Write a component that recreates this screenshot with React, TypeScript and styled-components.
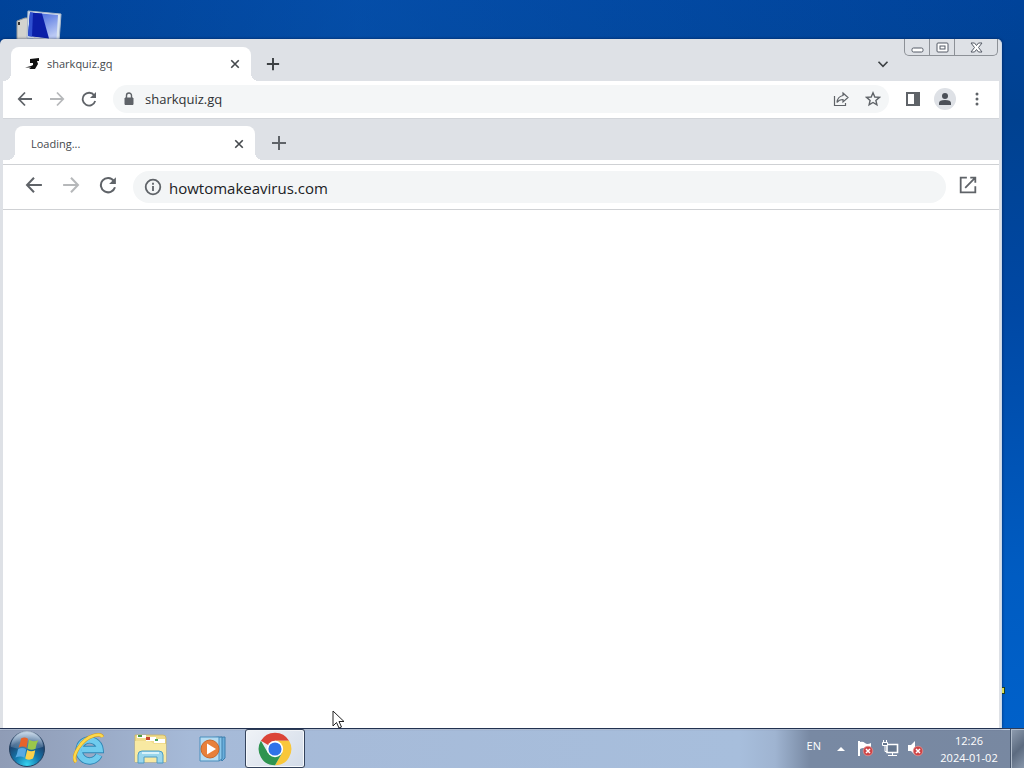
import React from "react";
import styled, { createGlobalStyle } from "styled-components";

const Global = createGlobalStyle`
  * { box-sizing: border-box; }
  body { margin: 0; font-family: "Open Sans", "Noto Sans", sans-serif; }
  button { border: 0; padding: 0; background: none; font: inherit; color: inherit; display: flex; align-items: center; justify-content: center; flex: none; }
  svg { display: block; }
`;

const Desktop = styled.div`
  min-height: 100vh;
  display: flex;
  flex-direction: column;
  background:
    linear-gradient(90deg, rgba(0, 70, 170, 0) 0%, rgba(10, 90, 185, 0.45) 35%, rgba(0, 70, 160, 0) 100%) 0 0 / 100% 39px no-repeat,
    linear-gradient(180deg, #00439a 0%, #004190 15%, #0048a4 40%, #005cc2 75%, #0062cc 100%);
`;

const Workspace = styled.main`
  flex: 1;
  display: flex;
  flex-direction: column;
  position: relative;
  padding: 39px 22px 0 0;
`;

const ComputerShortcut = styled.button`
  && { position: absolute; left: 16px; top: 10px; }
`;

const ShortcutEdge = styled.span`
  position: absolute;
  right: 19px;
  bottom: 34px;
  width: 3px;
  height: 7px;
  background: #d6dc5a;
  border: 1px solid #23401c;
  border-left: 0;
`;

const BrowserWindow = styled.section`
  flex: 1;
  position: relative;
  display: flex;
  flex-direction: column;
  background: #dee1e6;
  border-radius: 5px 5px 0 0;
  border-right: 1px solid #c9d9ec;
  padding: 0 2px 0 3px;
  box-shadow: 0 0 3px rgba(0, 20, 60, 0.7);
`;

const TabStrip = styled.div<{ $inner?: boolean }>`
  display: flex;
  align-items: center;
  height: 42px;
  padding: ${(p) => (p.$inner ? "8px 0 0 12px" : "8px 0 0 8px")};
  background: #dee1e6;
  box-shadow: ${(p) => (p.$inner ? "inset 0 1px #d2d5da" : "none")};
  border-radius: ${(p) => (p.$inner ? 0 : "5px 5px 0 0")};
  color: ${(p) => (p.$inner ? "#5f6368" : "#3c4043")};
`;

const Tab = styled.div<{ $inner?: boolean }>`
  position: relative;
  display: flex;
  align-items: center;
  width: 240px;
  height: 34px;
  padding: ${(p) => (p.$inner ? "1px 11px 0 16px" : "0 11px 0 14px")};
  gap: 8px;
  background: #fff;
  border-radius: 8px 8px 0 0;
  font-size: 11px;
  line-height: 16px;
  color: #45494d;
  &::before, &::after {
    content: "";
    position: absolute;
    bottom: 0;
    width: 8px;
    height: 8px;
  }
  &::before { left: -8px; background: radial-gradient(circle at 0 0, transparent 8px, #fff 8px); }
  &::after { right: -8px; background: radial-gradient(circle at 100% 0, transparent 8px, #fff 8px); }
`;

const TabTitle = styled.span`
  flex: 1;
`;

const NewTab = styled.button<{ $inner?: boolean }>`
  width: 28px;
  height: 28px;
  margin-left: ${(p) => (p.$inner ? 10 : 8)}px;
`;

const TabMenu = styled.button`
  && { margin: 0 104px 0 auto; }
  width: 24px;
  height: 24px;
`;

const CaptionButtons = styled.div`
  position: absolute;
  top: 0;
  right: 3px;
  display: flex;
  height: 17px;
  border: 1px solid #8d9197;
  border-top: 0;
  border-radius: 0 0 5px 5px;
  z-index: 1;
`;

const CaptionButton = styled.button<{ $wide?: boolean }>`
  width: ${(p) => (p.$wide ? 42 : 25)}px;
  &:not(:last-child) { border-right: 1px solid #8d9197; }
`;

const Toolbar = styled.form<{ $inner?: boolean }>`
  display: flex;
  align-items: center;
  height: ${(p) => (p.$inner ? 50 : 37)}px;
  background: #fff;
  color: #5f6368;
  padding: ${(p) => (p.$inner ? "0 19px" : "0 10px 1px")};
  border-top: ${(p) => (p.$inner ? "4px solid #fff" : "0")};
  box-shadow: ${(p) => (p.$inner ? "inset 0 1px #cfd1d4, inset 0 -1px #cfd1d4" : "none")};
`;

const NavButton = styled.button<{ $inner?: boolean; $off?: boolean }>`
  width: 24px;
  height: 24px;
  margin-right: ${(p) => (p.$inner ? 13 : 8)}px;
  margin-bottom: ${(p) => (p.$inner ? 4 : 0)}px;
  opacity: ${(p) => (p.$off ? 0.45 : 1)};
`;

const Omnibox = styled.label<{ $inner?: boolean }>`
  flex: 1;
  min-width: 0;
  display: flex;
  align-items: center;
  height: ${(p) => (p.$inner ? 32 : 28)}px;
  gap: ${(p) => (p.$inner ? 7 : 8)}px;
  padding: ${(p) => (p.$inner ? "0 12px 0 11px" : "0 8px")};
  margin-left: ${(p) => (p.$inner ? 0 : 4)}px;
  margin-right: ${(p) => (p.$inner ? 10 : 12)}px;
  background: ${(p) => (p.$inner ? "#f3f5f6" : "#f4f6f7")};
  border-radius: 16px;
`;

const Address = styled.input<{ $inner?: boolean }>`
  flex: 1;
  min-width: 0;
  border: 0;
  padding: ${(p) => (p.$inner ? "2px 0 0" : "0")};
  outline: 0;
  background: transparent;
  font-family: inherit;
  font-size: ${(p) => (p.$inner ? 15 : 13)}px;
  line-height: 20px;
  color: ${(p) => (p.$inner ? "#202124" : "#303236")};
`;

const ToolButton = styled.button<{ $inner?: boolean }>`
  width: 24px;
  height: 24px;
  margin-right: 8px;
  margin-bottom: ${(p) => (p.$inner ? 4 : 0)}px;
  &:last-child { margin-right: 0; }
`;

const ShareButton = styled(ToolButton)`
  margin-right: 4px;
`;

const Avatar = styled.span`
  width: 22px;
  height: 22px;
  border-radius: 50%;
  background: #dee1e6;
  display: flex;
  align-items: center;
  justify-content: center;
`;

const Page = styled.div`
  flex: 1;
  background: #fff;
`;

const Pointer = styled.svg`
  position: absolute;
  left: 332px;
  bottom: -3px;
`;

const Taskbar = styled.footer`
  display: flex;
  height: 40px;
  border-top: 1px solid #2e3c58;
  box-shadow: inset 0 1px #c3d0e2;
  background: linear-gradient(90deg, #8f9cb6 0, #95a4bf 60px, #a6bad8 190px, #a7bedc 740px, #9fb4d1 775px, #7889a3 810px, #7888a1 100%);
`;

const TaskButton = styled.button<{ $active?: boolean }>`
  width: 60px;
  height: 39px;
  margin-right: 2px;
  border-radius: 3px;
  ${(p) => p.$active && "background: linear-gradient(135deg, #f0f3f7, #d2dbe8); box-shadow: inset 0 0 0 1px #34435c, inset 0 0 0 2px #f6f9fc;"}
`;

const StartButton = styled.button`
  width: 54px;
  margin-right: 5px;
`;

const Tray = styled.div`
  display: flex;
  align-items: center;
  margin-left: auto;
  color: #fff;
  font-size: 11px;
  line-height: 17px;
`;

const Language = styled.button`
  margin: 0 16px 6px 0;
`;

const TrayButton = styled.button`
  height: 24px;
  margin-right: 8px;
`;

const HiddenIcons = styled(TrayButton)`
  margin-right: 12px;
`;

const Clock = styled.time`
  width: 60px;
  margin: 0 11px 0 7px;
  text-align: center;
  white-space: nowrap;
`;

const ShowDesktop = styled.button`
  width: 14px;
  height: 39px;
  background: linear-gradient(135deg, #92a0b3, #5c6b80 55%, #8796aa);
  box-shadow: inset 1px 0 #47566c, inset 2px 1px #b0bccb;
`;

const Stroke = ({ d, size = 16, w = 2 }: { d: string; size?: number; w?: number }) => (
  <svg width={size} height={size} viewBox="0 0 16 16" fill="none" stroke="currentColor" strokeWidth={w}>
    <path d={d} />
  </svg>
);

const Back = ({ size = 16 }) => <Stroke size={size} w={1.8} d="M15 8H2M8 1.5L1.8 8L8 14.5" />;
const Forward = ({ size = 16 }) => <Stroke size={size} w={1.8} d="M1 8h13M8 1.5L14.2 8L8 14.5" />;
const Reload = ({ size = 16 }) => (
  <svg width={size} height={size} viewBox="0 0 16 16" fill="none" stroke="currentColor" strokeWidth="1.8">
    <path d="M13.2 4.3A6.4 6.4 0 1 0 14.2 10" />
    <path d="M15 1v6H9z" fill="currentColor" stroke="none" />
  </svg>
);
const Close = () => <Stroke size={10} w={2.6} d="M2 2L14 14M14 2L2 14" />;

const Badge = ({ x, y }: { x: number; y: number }) => (
  <g>
    <circle cx={x} cy={y} r="4.8" fill="#cf4446" stroke="#e79c9a" strokeWidth=".7" />
    <path d={`M${x - 2} ${y - 2}l4 4m0-4l-4 4`} stroke="#fff" strokeWidth="1.5" />
  </g>
);

const StartOrb = () => (
  <svg width="38" height="38" viewBox="0 0 38 38">
    <defs>
      <radialGradient id="orb" cx=".5" cy=".95" r=".9">
        <stop offset="0" stopColor="#35d3f0" />
        <stop offset=".4" stopColor="#1478ad" />
        <stop offset=".75" stopColor="#1d4470" />
        <stop offset="1" stopColor="#7f9cbd" />
      </radialGradient>
      <linearGradient id="gloss" x2="0" y2="1">
        <stop offset="0" stopColor="#e4eef7" stopOpacity=".75" />
        <stop offset="1" stopColor="#a9c5dd" stopOpacity=".2" />
      </linearGradient>
    </defs>
    <circle cx="19" cy="19" r="17.5" fill="url(#orb)" stroke="#25405f" />
    <path d="M3 17a16 16 0 0 1 32 0q-16 5-32 0z" fill="url(#gloss)" />
    <path d="M13 8.500q3.500-2.300 7 .3L18.500 18q-3.500-2.800-8-.2q1.800-4 2.500-9.300z" fill="#e8632a" />
    <path d="M21 9.800q4 2.500 9.300.4Q28 14 27.500 18.800q-4 2-8-.3z" fill="#9bc84a" />
    <path d="M10 19.200q4.500-2.400 8.200.3l-1.800 8.300q-3.600-2.500-9-.2Q9.300 24 10 19.200z" fill="#58a9e2" />
    <path d="M19.200 20q4 2.300 8 .2-.7 5-2.200 8.400-4 2.200-7.800-.2z" fill="#fbd14b" />
  </svg>
);

const Explorer = () => (
  <svg width="32" height="34" viewBox="0 0 32 34">
    <path d="M26 23A10.500 10.500 0 1 1 27 17.500H9" fill="none" stroke="#2f86b5" strokeWidth="7.400" />
    <path d="M26 23A10.500 10.500 0 1 1 27 17.500H9" fill="none" stroke="#6fcbee" strokeWidth="5.600" />
    <path d="M3 30C-2 25 8 7 21 3.500q7-2 8.500 1.500" fill="none" stroke="#d79b19" strokeWidth="3.400" />
    <path d="M3 30C-2 25 8 7 21 3.500q7-2 8.500 1.500" fill="none" stroke="#fcd94c" strokeWidth="2.400" />
  </svg>
);

const Folder = () => (
  <svg width="34" height="32" viewBox="0 0 34 32">
    <path d="M1 2h28q3 0 3 3v24H1z" fill="#f0dc8c" stroke="#cbb460" strokeWidth=".8" />
    <path d="M3 2h9v3H3zM12 4h10v4H12zM20 6h11v4H20z" fill="#fff" />
    <path d="M4 2h4v2H4z" fill="#4c9e45" /><path d="M12 4h4v3h-4z" fill="#c8452f" /><path d="M21 6h3v2h-3z" fill="#45a05a" />
    <path d="M1 8h15l4 3h12v18H1z" fill="#f8e9a2" />
    <path d="M4 30v-8q0-4 4-4h17q4 0 4 4v8h-6v-6H10v6z" fill="#9ad6ec" stroke="#4d9cc5" />
    <path d="M8 20h17" stroke="#d8f2fa" strokeWidth="2" />
  </svg>
);

const MediaPlayer = () => (
  <svg width="28" height="28" viewBox="0 0 28 28">
    <path d="M7 3l19-1v21l-3 3z" fill="#6aaedb" stroke="#3c7ead" />
    <path d="M4 3l19-1v22l-3 2z" fill="#8bc7ea" stroke="#3c7ead" />
    <path d="M1 2h19v24H1z" fill="#b5dcf2" stroke="#4b8fbd" />
    <circle cx="11" cy="14" r="9" fill="#e8803a" stroke="#c9682a" />
    <path d="M8 8.500v11l9-5.500z" fill="#fff" />
  </svg>
);

const Chrome = () => (
  <svg width="34" height="34" viewBox="0 0 48 48">
    <path d="M24 24L4.080 12.500A23 23 0 0 1 43.920 12.500H24z" fill="#db4437" />
    <path d="M24 24l9.960 5.750L24 47A23 23 0 0 0 43.920 12.500H24z" fill="#f9c73a" />
    <path d="M24 24l-9.960 5.750L4.080 12.500A23 23 0 0 0 24 47l9.960-17.250z" fill="#2f9450" />
    <circle cx="24" cy="24" r="11.500" fill="#fff" />
    <circle cx="24" cy="24" r="9.300" fill="#2f72e8" />
  </svg>
);

const Computer = () => (
  <svg width="46" height="36" viewBox="0 0 46 36">
    <defs>
      <linearGradient id="screen" x2=".6" y2="1">
        <stop offset="0" stopColor="#2c55d8" /><stop offset="1" stopColor="#b9c8f4" />
      </linearGradient>
    </defs>
    <path d="M1 11l8-3h7v28H1z" fill="#d3d3cf" stroke="#9a9c9a" />
    <path d="M2 12h2v3H2z" fill="#333" />
    <path d="M12 1l33 3-2 28-32-4z" fill="#d9e4ef" stroke="#a9b8cc" />
    <path d="M14 2.500l28 2.500-1.500 24L12 26z" fill="url(#screen)" />
    <path d="M14 2.500l12 1 7 25L12 26z" fill="#0a1fa8" />
    <path d="M14 2.500l3 .3-1 23.700-4-.5z" fill="#2f50d0" />
    <path d="M18 27l20 3v6H14z" fill="#c3c9cf" />
  </svg>
);

export default function App() {
  return (
    <Desktop>
      <Global />
      <Workspace>
        <ComputerShortcut aria-label="Computer"><Computer /></ComputerShortcut>
        <BrowserWindow>
          <CaptionButtons>
            <CaptionButton aria-label="Minimize">
              <svg width="13" height="17" viewBox="0 0 13 17"><rect x="1" y="9" width="11" height="4" rx="1.500" fill="#fff" stroke="#555b66" /></svg>
            </CaptionButton>
            <CaptionButton aria-label="Maximize">
              <svg width="13" height="17" viewBox="0 0 13 17" fill="#fff" stroke="#555b66"><rect x="1" y="4" width="11" height="9" rx="1" /><rect x="4" y="7" width="5" height="3" /></svg>
            </CaptionButton>
            <CaptionButton $wide aria-label="Close">
              <svg width="13" height="17" viewBox="0 0 13 17"><path d="M1 4h3.500l2 2.500 2-2.500H12L8.500 8.500 12 13H8.500l-2-2.500-2 2.500H1l3.500-4.500z" fill="#fff" stroke="#555b66" /></svg>
            </CaptionButton>
          </CaptionButtons>
          <TabStrip>
            <Tab>
              <svg width="14" height="12" viewBox="0 0 14 12"><path d="M5 1l9-1v3h-2l1 3-3 5H4l2-1.500H0L6 8l2-1V5H5z" fill="#111" /></svg>
              <TabTitle>sharkquiz.gq</TabTitle>
              <button aria-label="Close tab"><Close /></button>
            </Tab>
            <NewTab aria-label="New tab"><Stroke size={14} w={2.2} d="M8 1v14M1 8h14" /></NewTab>
            <TabMenu aria-label="Search tabs"><Stroke size={12} w={2.2} d="M2 5l6 6 6-6" /></TabMenu>
          </TabStrip>
          <Toolbar>
            <NavButton type="button" aria-label="Back"><Back /></NavButton>
            <NavButton type="button" $off aria-label="Forward"><Forward /></NavButton>
            <NavButton type="button" aria-label="Reload"><Reload /></NavButton>
            <Omnibox>
              <svg width="16" height="16" viewBox="0 0 16 16"><path d="M4 7h8v6.500H4z" fill="#5f6368" stroke="#5f6368" strokeLinejoin="round" /><path d="M5.500 7V4.500a2.500 2.500 0 0 1 5 0V7" fill="none" stroke="#5f6368" strokeWidth="1.400" /></svg>
              <Address aria-label="Address" defaultValue="sharkquiz.gq" />
              <ShareButton type="button" aria-label="Share">
                <svg width="16" height="16" viewBox="0 0 16 16" fill="none" stroke="currentColor" strokeWidth="1.200"><path d="M1.500 5v9.500h11V12" /><path d="M10 2l5 4.500-5 4.500V8.500q-4 0-6 3 .5-6 6-7z" /></svg>
              </ShareButton>
              <button type="button" aria-label="Bookmark"><Stroke size={16} w={1.4} d="M8 1.800l1.800 4.200 4.600.4-3.500 3 1 4.500L8 11.500l-3.900 2.400 1-4.500-3.500-3 4.600-.4z" /></button>
            </Omnibox>
            <ToolButton type="button" aria-label="Side panel">
              <svg width="16" height="16" viewBox="0 0 16 16"><path d="M1 1h14v14H1zM3 3v10h6V3z" fill="currentColor" fillRule="evenodd" /></svg>
            </ToolButton>
            <ToolButton type="button" aria-label="Profile">
              <Avatar><svg width="14" height="14" viewBox="0 0 14 14" fill="#4b5058"><circle cx="7" cy="4" r="3" /><path d="M1 13v-2q0-3 6-3t6 3v2z" /></svg></Avatar>
            </ToolButton>
            <ToolButton type="button" aria-label="Menu">
              <svg width="4" height="14" viewBox="0 0 4 14" fill="currentColor"><circle cx="2" cy="2" r="1.500" /><circle cx="2" cy="7" r="1.500" /><circle cx="2" cy="12" r="1.500" /></svg>
            </ToolButton>
          </Toolbar>
          <TabStrip $inner>
            <Tab $inner>
              <TabTitle>Loading...</TabTitle>
              <button aria-label="Close tab"><Close /></button>
            </Tab>
            <NewTab $inner aria-label="New tab"><Stroke size={16} w={2} d="M8 1v14M1 8h14" /></NewTab>
          </TabStrip>
          <Toolbar $inner>
            <NavButton type="button" $inner aria-label="Back"><Back size={18} /></NavButton>
            <NavButton type="button" $inner $off aria-label="Forward"><Forward size={18} /></NavButton>
            <NavButton type="button" $inner aria-label="Reload"><Reload size={18} /></NavButton>
            <Omnibox $inner>
              <svg width="18" height="18" viewBox="0 0 18 18" fill="none" stroke="#5f6368" strokeWidth="1.800"><circle cx="9" cy="9" r="7.300" /><path d="M9 8v5M9 4.800v1.900" /></svg>
              <Address $inner aria-label="Page address" defaultValue="howtomakeavirus.com" />
            </Omnibox>
            <ToolButton $inner type="button" aria-label="Open in new window"><Stroke size={18} w={1.6} d="M7 1.500H1.500v13h13V9M10 1.500h4.500V6M14.500 1.500L5.500 10.500" /></ToolButton>
          </Toolbar>
          <Page />
        </BrowserWindow>
        <ShortcutEdge />
        <Pointer width="13" height="21" viewBox="0 0 13 21"><path d="M1 1v15l3.500-3.500L7 18l2.500-1L7 11.500h5z" fill="#fff" stroke="#222" /></Pointer>
      </Workspace>
      <Taskbar>
        <StartButton aria-label="Start"><StartOrb /></StartButton>
        <TaskButton aria-label="Internet Explorer"><Explorer /></TaskButton>
        <TaskButton aria-label="Windows Explorer"><Folder /></TaskButton>
        <TaskButton aria-label="Media Player"><MediaPlayer /></TaskButton>
        <TaskButton $active aria-label="Google Chrome"><Chrome /></TaskButton>
        <Tray>
          <Language>EN</Language>
          <HiddenIcons aria-label="Show hidden icons"><svg width="8" height="4" viewBox="0 0 8 4"><path d="M4 0l4 4H0z" fill="#fff" /></svg></HiddenIcons>
          <TrayButton aria-label="Action Center">
            <svg width="17" height="17" viewBox="0 0 17 17"><path d="M2 1v15" stroke="#fff" strokeWidth="2" /><path d="M3 2q3-1 5 1t6 0v7q-3 1-5-1t-6 0z" fill="#fff" /><Badge x={11} y={11} /></svg>
          </TrayButton>
          <TrayButton aria-label="Network">
            <svg width="17" height="17" viewBox="0 0 17 17" fill="none" stroke="#fff"><path d="M5 4.500h10.500v8H5z" fill="#66778f" strokeWidth="1.600" /><path d="M6 15.500h9M10.500 13v2M3 6v5.500h2" /><path d="M1.500 0v2M4.500 0v2" /><path d="M.5 2.500h5v3h-5z" fill="#66778f" /></svg>
          </TrayButton>
          <TrayButton aria-label="Volume">
            <svg width="17" height="17" viewBox="0 0 17 17"><path d="M1 5h3l4-4v14l-4-4H1z" fill="#fff" /><Badge x={11} y={11} /></svg>
          </TrayButton>
          <Clock dateTime="2024-01-02T12:26">12:26<br />2024-01-02</Clock>
          <ShowDesktop aria-label="Show desktop" />
        </Tray>
      </Taskbar>
    </Desktop>
  );
}
